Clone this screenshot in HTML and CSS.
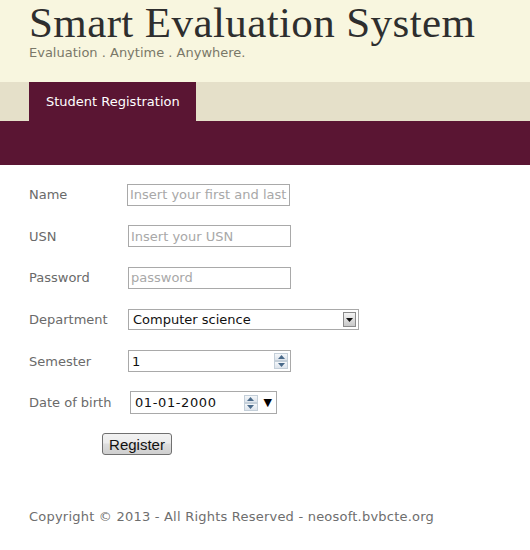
FILE: index.html
```html
<!DOCTYPE html>
<html>
<head>
<meta charset="utf-8">
<link rel="stylesheet" href="styles.css">
</head>
<body>
<header class="masthead">
  <h1 class="title">Smart Evaluation System</h1>
  <p class="tagline">Evaluation . Anytime . Anywhere.</p>
</header>
<nav class="navbar">
  <a class="tab">Student Registration</a>
</nav>
<div class="band"></div>
<main class="content">
  <form class="form">
    <label class="lbl">Name</label>
    <div class="cell"><input class="field w-name" type="text" placeholder="Insert your first and last name"></div>
    <label class="lbl">USN</label>
    <div class="cell"><input class="field" type="text" placeholder="Insert your USN"></div>
    <label class="lbl">Password</label>
    <div class="cell"><input class="field" type="text" placeholder="password"></div>
    <label class="lbl">Department</label>
    <div class="cell">
      <div class="select">
        <span class="select-text">Computer science</span>
        <span class="select-btn"><svg width="7" height="4" viewBox="0 0 7 4"><path d="M0 0h7L3.5 4z" fill="#111"/></svg></span>
      </div>
    </div>
    <label class="lbl">Semester</label>
    <div class="cell">
      <div class="numbox">
        <span class="num-text">1</span>
        <span class="spin">
          <span class="spin-btn"><svg width="7" height="4" viewBox="0 0 7 4"><path d="M0 4h7L3.5 0z" fill="#4a6a8a"/></svg></span>
          <span class="spin-btn"><svg width="7" height="4" viewBox="0 0 7 4"><path d="M0 0h7L3.5 4z" fill="#4a6a8a"/></svg></span>
        </span>
      </div>
    </div>
    <label class="lbl">Date of birth</label>
    <div class="cell">
      <div class="datebox">
        <span class="date-text">01-01-2000</span>
        <span class="spin">
          <span class="spin-btn"><svg width="7" height="4" viewBox="0 0 7 4"><path d="M0 4h7L3.5 0z" fill="#4a6a8a"/></svg></span>
          <span class="spin-btn"><svg width="7" height="4" viewBox="0 0 7 4"><path d="M0 0h7L3.5 4z" fill="#4a6a8a"/></svg></span>
        </span>
        <span class="date-drop">&#9660;</span>
      </div>
    </div>
    <div class="btn-row"><button class="btn" type="button">Register</button></div>
  </form>
  <footer class="footer">Copyright © 2013 - All Rights Reserved - neosoft.bvbcte.org</footer>
</main>
</body>
</html>
```
FILE: styles.css
```css
html, body {
  margin: 0;
  padding: 0;
  background: #ffffff;
}
body {
  font-family: "DejaVu Sans", Verdana, sans-serif;
  width: 530px;
  height: 550px;
  overflow: hidden;
}
.masthead {
  background: #f8f6df;
  height: 82px;
  padding-left: 29px;
  box-sizing: border-box;
}
.title {
  margin: 0;
  font-family: "Liberation Serif", "Times New Roman", serif;
  font-weight: normal;
  font-size: 43px;
  line-height: 46px;
  color: #2e2e2e;
  letter-spacing: 0.4px;
}
.tagline {
  margin: 0;
  font-size: 13px;
  line-height: 14px;
  color: #7a7868;
}
.navbar {
  background: #e5e0c9;
  height: 39px;
  padding-left: 29px;
  display: flex;
}
.tab {
  background: #5a1533;
  color: #ffffff;
  font-size: 13px;
  padding: 0 16px 1px 17px;
  display: flex;
  align-items: center;
}
.band {
  background: #5a1533;
  height: 44px;
}
.content {
  padding-left: 29px;
}
.form {
  display: grid;
  grid-template-columns: 98px auto;
  grid-auto-rows: 41.6px;
  margin-top: 9px;
  align-items: center;
}
.lbl {
  font-size: 13px;
  color: #6a6a6a;
}
.cell {
  display: flex;
  align-items: center;
}
.field {
  width: 163px;
  height: 22px;
  box-sizing: border-box;
  border: 1px solid #a9a9a9;
  padding: 0 2px;
  font-family: "DejaVu Sans", Verdana, sans-serif;
  font-size: 13px;
  margin: 0 0 0 1px;
  outline: none;
}
.field.w-name { margin-left: 0; }
.field::placeholder { color: #a8a8a8; }
.select {
  margin-left: 1px;
  width: 231px;
  height: 21px;
  box-sizing: border-box;
  border: 1px solid #a9a9a9;
  display: flex;
  align-items: center;
  justify-content: space-between;
  font-size: 13px;
  color: #111;
}
.select-text { padding-left: 4px; }
.select-btn {
  width: 13px;
  height: 15px;
  margin-right: 2px;
  border: 1px solid #8a8a8a;
  background: linear-gradient(#f4f4f4, #c8c8c8);
  display: flex;
  align-items: center;
  justify-content: center;
  box-sizing: border-box;
}
.numbox {
  margin-left: 1px;
  width: 163px;
  height: 22px;
  box-sizing: border-box;
  border: 1px solid #a9a9a9;
  display: flex;
  align-items: center;
  justify-content: space-between;
  font-size: 13px;
  color: #111;
}
.num-text { padding-left: 3px; }
.spin {
  display: flex;
  flex-direction: column;
  margin-right: 2px;
}
.spin-btn {
  width: 14px;
  height: 8px;
  box-sizing: border-box;
  border: 1px solid #c4cfd9;
  background: linear-gradient(#f4f7fa, #dde4ec);
  display: flex;
  align-items: center;
  justify-content: center;
}
.datebox {
  margin-left: 3px;
  width: 147px;
  height: 23px;
  box-sizing: border-box;
  border: 1px solid #a9a9a9;
  display: flex;
  align-items: center;
  font-size: 13px;
  color: #111;
}
.date-text {
  padding-left: 4px;
  letter-spacing: 0.6px;
  flex: 1;
}
.date-drop {
  font-size: 11px;
  margin: 0 4px 0 4px;
  color: #000;
}
.btn-row {
  grid-column: 1 / span 2;
  padding-left: 73px;
}
.btn {
  font-family: "Liberation Sans", Arial, sans-serif;
  font-size: 15px;
  color: #111;
  height: 22px;
  width: 70px;
  padding: 0;
  border: 1px solid #707070;
  border-radius: 3px;
  background: linear-gradient(#f2f2f2 0%, #ebebeb 45%, #dddddd 50%, #cfcfcf 100%);
}
.footer {
  margin-top: 44px;
  font-size: 13px;
  letter-spacing: 0.22px;
  color: #6e6e6e;
}
```
